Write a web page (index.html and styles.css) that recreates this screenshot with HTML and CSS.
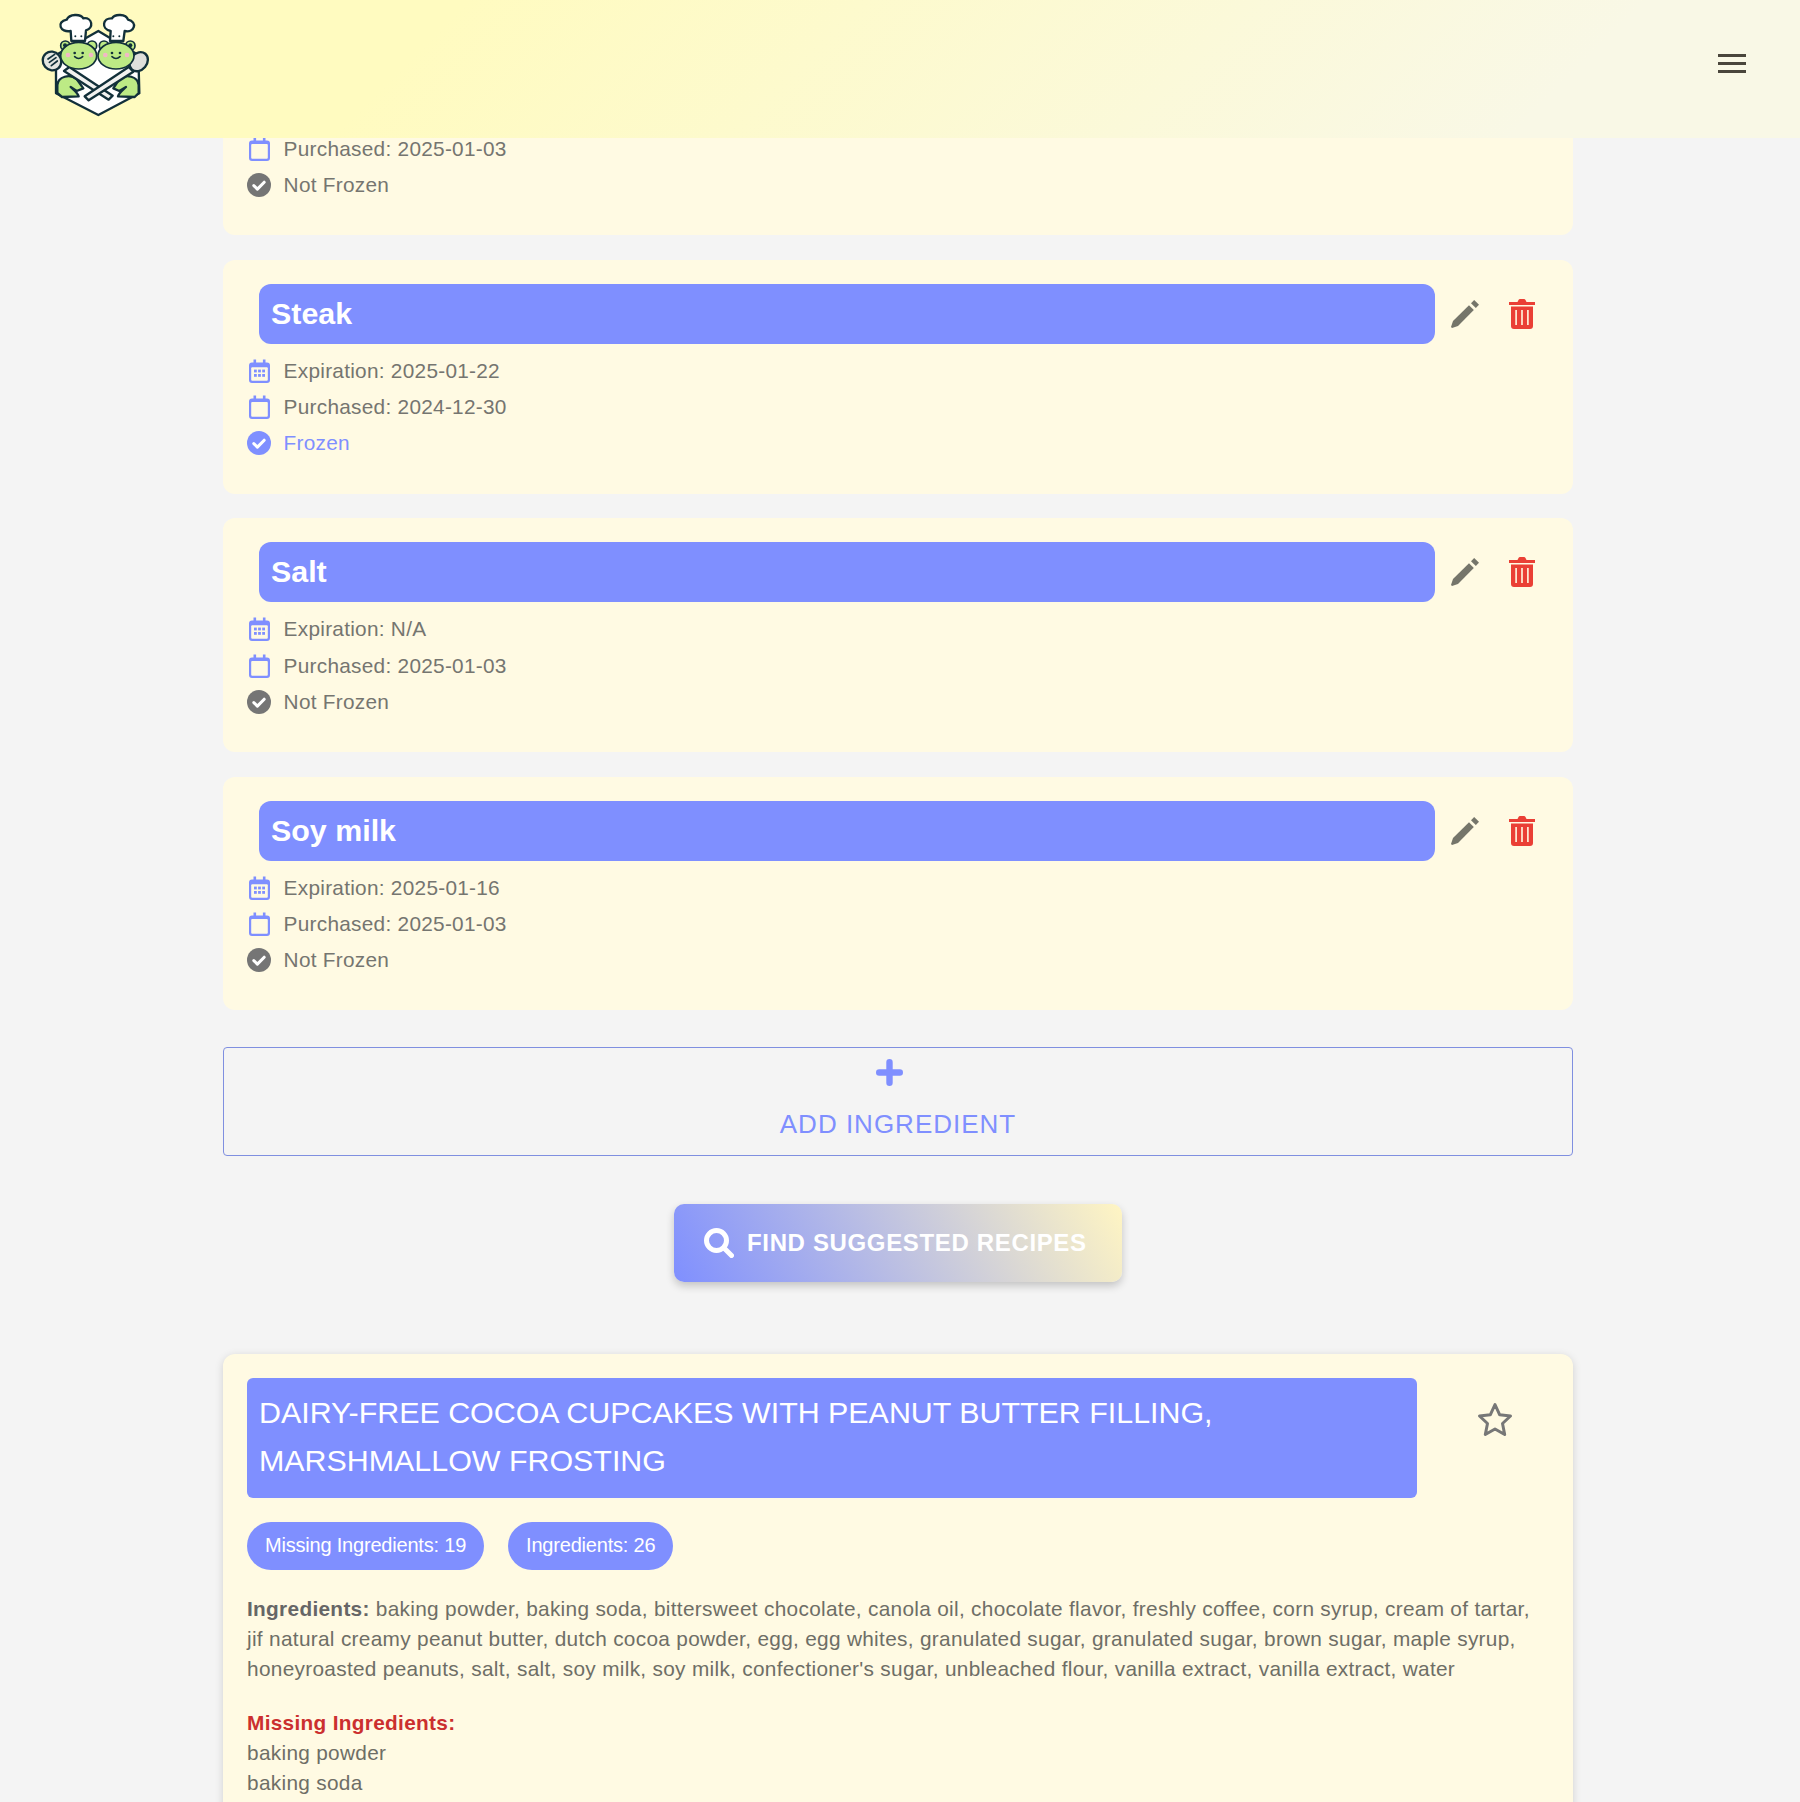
FILE: index.html
```html
<!DOCTYPE html>
<html lang="en">
<head>
<meta charset="utf-8">
<title>Pantry</title>
<link rel="stylesheet" href="styles.css">
</head>
<body>
<svg class="defs" width="0" height="0" aria-hidden="true">
  <defs>
    <symbol id="cal-days" viewBox="0 0 21 24">
      <path d="M4.5 0.5h2.6v3h6.8v-3h2.6v3H18a3 3 0 0 1 3 3V21a3 3 0 0 1-3 3H3a3 3 0 0 1-3-3V6.500a3 3 0 0 1 3-3h1.500z"/>
      <rect class="cal-in" x="2.2" y="8.200" width="16.600" height="13.600" rx="1"/>
      <g class="cal-dots">
        <rect x="5" y="10.600" width="2.800" height="2.800"/><rect x="9.100" y="10.600" width="2.800" height="2.800"/><rect x="13.200" y="10.600" width="2.800" height="2.800"/>
        <rect x="5" y="15" width="2.800" height="2.800"/><rect x="9.100" y="15" width="2.800" height="2.800"/><rect x="13.200" y="15" width="2.800" height="2.800"/>
      </g>
    </symbol>
    <symbol id="cal-blank" viewBox="0 0 21 24">
      <path d="M4.500 0.500h2.600v3h6.800v-3h2.600v3H18a3 3 0 0 1 3 3V21a3 3 0 0 1-3 3H3a3 3 0 0 1-3-3V6.500a3 3 0 0 1 3-3h1.500z"/>
      <rect class="cal-in" x="2.200" y="7" width="16.600" height="14.800" rx="1"/>
    </symbol>
    <symbol id="check" viewBox="0 0 24 24">
      <circle cx="12" cy="12" r="12"/>
      <path class="check-mark" d="M6.800 12.600L10.400 16.100 17.200 9.200"/>
    </symbol>
    <symbol id="pencil" viewBox="0 0 28 28">
      <path d="M20 3.200L23.200 0 28 4.800 24.800 8z"/>
      <path d="M18 5.200L22.800 10 7 26 1 28 0 27 2 21z"/>
    </symbol>
    <symbol id="trash" viewBox="0 0 26 30">
      <path d="M0 3h8.500L9.500 1a2 2 0 0 1 1.500-1h4a2 2 0 0 1 1.500 1l1 2H26v3H0z"/>
      <path fill-rule="evenodd" d="M2 7.500h22V27a3 3 0 0 1-3 3H5a3 3 0 0 1-3-3zM6.300 11v15h1.600V11zM12.200 11v15h1.600V11zM18.100 11v15h1.600V11z"/>
    </symbol>
  </defs>
</svg>

<header class="topbar">
  <svg class="logo" viewBox="0 0 390 360" role="img" aria-label="Two chef frogs logo">
    <g stroke="#12303a" stroke-width="7" stroke-linejoin="round" stroke-linecap="round">
      <path d="M205 78L325 150 328 265 205 330 78 265 78 150z" fill="#fff"/>
      <path d="M82 240C84 214 120 206 140 222L160 250 140 258 122 246C132 256 142 262 146 274L96 276 82 264z" fill="#bdea85"/>
      <path d="M326 240C324 214 288 206 268 222L250 250 268 258 288 246C278 256 268 262 264 274L314 276 326 264z" fill="#bdea85"/>
      <path d="M236 284L248 272 118 186 102 198z" fill="#f2f2f0"/>
      <path d="M176 286L164 274 296 186 310 200z" fill="#f2f2f0"/>
      <ellipse cx="66" cy="168" rx="27" ry="29" transform="rotate(-40 66 168)" fill="#e4e6e0"/>
      <ellipse cx="326" cy="170" rx="25" ry="31" transform="rotate(40 326 170)" fill="#dfdfdb"/>
      <g fill="#bdea85" stroke-width="5">
        <circle cx="106" cy="122" r="14"/><circle cx="186" cy="122" r="14"/>
        <circle cx="222" cy="122" r="14"/><circle cx="301" cy="122" r="14"/>
        <ellipse cx="146" cy="152" rx="54" ry="40"/>
        <ellipse cx="258" cy="152" rx="54" ry="40"/>
      </g>
      <g fill="#fff" stroke-width="7">
        <path d="M122 78C90 84 78 50 110 44 118 26 152 26 160 40 188 36 192 70 168 76L165 108 124 108z"/>
        <path d="M242 78C212 72 218 38 246 40 254 26 288 26 294 44 324 50 314 84 284 78L280 108 240 108z"/>
      </g>
    </g>
    <g fill="#12303a">
      <circle cx="105" cy="121" r="6"/><circle cx="301" cy="121" r="6"/>
      <circle cx="134" cy="144" r="4"/><circle cx="158" cy="144" r="4"/>
      <circle cx="246" cy="144" r="4"/><circle cx="270" cy="144" r="4"/>
      <circle cx="136" cy="94" r="3"/><circle cx="154" cy="94" r="3"/>
      <circle cx="250" cy="94" r="3"/><circle cx="268" cy="94" r="3"/>
    </g>
    <g fill="#f2b8c6">
      <circle cx="114" cy="150" r="7"/><circle cx="183" cy="150" r="7"/>
      <circle cx="226" cy="150" r="7"/><circle cx="291" cy="150" r="7"/>
    </g>
    <g fill="none" stroke="#12303a" stroke-width="5" stroke-linecap="round">
      <path d="M134 155Q146 166 158 155"/><path d="M246 155Q258 166 270 155"/>
      <path d="M54 162L74 148M58 172L78 158M64 182L82 168"/>
    </g>
  </svg>
  <button class="menu" type="button" aria-label="Menu"><span></span><span></span><span></span></button>
</header>

<main class="page">
  <section class="item item-cut">
    <ul class="facts">
      <li><svg class="ic ic-cal"><use href="#cal-blank"/></svg>Purchased: 2025-01-03</li>
      <li><svg class="ic ic-check"><use href="#check"/></svg>Not Frozen</li>
    </ul>
  </section>

  <section class="item">
    <div class="item-head">
      <h2 class="item-title">Steak</h2>
      <button class="act act-edit" type="button" aria-label="Edit"><svg class="ic-edit"><use href="#pencil"/></svg></button>
      <button class="act act-del" type="button" aria-label="Delete"><svg class="ic-del"><use href="#trash"/></svg></button>
    </div>
    <ul class="facts">
      <li><svg class="ic ic-cal"><use href="#cal-days"/></svg>Expiration: 2025-01-22</li>
      <li><svg class="ic ic-cal"><use href="#cal-blank"/></svg>Purchased: 2024-12-30</li>
      <li class="is-frozen"><svg class="ic ic-check"><use href="#check"/></svg>Frozen</li>
    </ul>
  </section>

  <section class="item">
    <div class="item-head">
      <h2 class="item-title">Salt</h2>
      <button class="act act-edit" type="button" aria-label="Edit"><svg class="ic-edit"><use href="#pencil"/></svg></button>
      <button class="act act-del" type="button" aria-label="Delete"><svg class="ic-del"><use href="#trash"/></svg></button>
    </div>
    <ul class="facts">
      <li><svg class="ic ic-cal"><use href="#cal-days"/></svg>Expiration: N/A</li>
      <li><svg class="ic ic-cal"><use href="#cal-blank"/></svg>Purchased: 2025-01-03</li>
      <li><svg class="ic ic-check"><use href="#check"/></svg>Not Frozen</li>
    </ul>
  </section>

  <section class="item">
    <div class="item-head">
      <h2 class="item-title">Soy milk</h2>
      <button class="act act-edit" type="button" aria-label="Edit"><svg class="ic-edit"><use href="#pencil"/></svg></button>
      <button class="act act-del" type="button" aria-label="Delete"><svg class="ic-del"><use href="#trash"/></svg></button>
    </div>
    <ul class="facts">
      <li><svg class="ic ic-cal"><use href="#cal-days"/></svg>Expiration: 2025-01-16</li>
      <li><svg class="ic ic-cal"><use href="#cal-blank"/></svg>Purchased: 2025-01-03</li>
      <li><svg class="ic ic-check"><use href="#check"/></svg>Not Frozen</li>
    </ul>
  </section>

  <button class="add" type="button">
    <svg class="add-plus" viewBox="0 0 27 27"><path d="M13.500 3.200v20.600M3.200 13.500h20.600"/></svg>
    <span class="add-label">ADD INGREDIENT</span>
  </button>

  <div class="find-wrap">
    <button class="find" type="button">
      <svg class="find-ic" viewBox="0 0 30 30"><circle cx="12.500" cy="12.500" r="10"/><path d="M20.500 20.500L27.500 27.500"/></svg>
      FIND SUGGESTED RECIPES
    </button>
  </div>

  <article class="recipe">
    <div class="recipe-head">
      <h2 class="recipe-title">DAIRY-FREE COCOA CUPCAKES WITH PEANUT BUTTER FILLING, MARSHMALLOW FROSTING</h2>
      <button class="fav" type="button" aria-label="Favourite">
        <svg class="fav-ic" viewBox="0 0 40 40"><path d="M20 4.500L24.700 14.800 35.500 16 27.500 23.500 29.700 34.500 20 29 10.300 34.500 12.500 23.500 4.500 16 15.300 14.800z"/></svg>
      </button>
    </div>
    <div class="chips">
      <span class="chip">Missing Ingredients: 19</span>
      <span class="chip">Ingredients: 26</span>
    </div>
    <p class="ing"><strong>Ingredients:</strong> baking powder, baking soda, bittersweet chocolate, canola oil, chocolate flavor, freshly coffee, corn syrup, cream of tartar, jif natural creamy peanut butter, dutch cocoa powder, egg, egg whites, granulated sugar, granulated sugar, brown sugar, maple syrup, honeyroasted peanuts, salt, salt, soy milk, soy milk, confectioner's sugar, unbleached flour, vanilla extract, vanilla extract, water</p>
    <h3 class="miss-title">Missing Ingredients:</h3>
    <ul class="miss">
      <li>baking powder</li>
      <li>baking soda</li>
    </ul>
  </article>
</main>
</body>
</html>
```
FILE: styles.css
```css
* { box-sizing: border-box; }

html, body {
  height: 1802px;
  margin: 0;
  overflow: hidden;
}

body {
  background: #f4f4f4;
  color: #6e6e66;
  font-family: "Liberation Sans", Arial, sans-serif;
}

.defs { position: absolute; }

button {
  font-family: inherit;
  border: 0;
  background: none;
  padding: 0;
}

.topbar {
  position: fixed;
  top: 0;
  left: 0;
  width: 100%;
  height: 138px;
  z-index: 10;
  display: flex;
  align-items: flex-start;
  justify-content: space-between;
  padding: 5px 54px 0 30px;
  background: linear-gradient(135deg, #fffbc0 24%, #f9f8e6 85%);
}

.logo { width: 130px; height: 120px; display: block; }

.menu {
  display: flex;
  flex-direction: column;
  gap: 5.200px;
  width: 28px;
  margin-top: 48.500px;
}

.menu span { display: block; height: 3px; background: #4a463c; }

.page {
  width: 1795px;
  padding: 131px 222px 0 223px;
}

.item {
  background: #fffae3;
  border-radius: 12px;
  padding: 24px 22.500px 32.400px 21.600px;
  margin-bottom: 24.600px;
}

.item-cut { padding: 0 21.500px 32.140px 21.600px; border-radius: 0 0 12px 12px; }

.item-head { display: flex; align-items: stretch; margin-left: 14.400px; margin-bottom: 9px; }

.item-title {
  flex: 1;
  height: 60px;
  margin: 0;
  padding: 0 12px;
  background: #7f8fff;
  color: #fff;
  border-radius: 12px;
  font-size: 30.400px;
  font-weight: 700;
  line-height: 58px;
}

.act {
  width: 57px;
  display: flex;
  align-items: center;
  justify-content: center;
}

.act-edit { margin-left: 1.500px; }
.ic-edit { width: 28px; height: 28px; fill: #75756a; }
.ic-del { width: 26px; height: 30px; fill: #ea3f35; }

.facts { list-style: none; margin: 0; padding: 0; }

.facts li {
  display: flex;
  align-items: center;
  height: 36.130px;
  font-size: 20.800px;
  letter-spacing: 0.270px;
  color: #757570;
}

.facts .is-frozen { color: #7f8fff; }

.ic { flex: none; width: 24px; height: 24px; margin-right: 13px; margin-left: 2px; fill: #7f8fff; }
.ic-cal { width: 21px; margin-left: 4px; margin-right: 14px; }
.ic-check { fill: #757575; }
.is-frozen .ic-check { fill: #7f8fff; }
.check-mark { fill: none; stroke: #fff; stroke-width: 3; stroke-linecap: round; stroke-linejoin: round; }
.cal-in { fill: #fffae3; }
.cal-dots { fill: #7f8fff; }

.add {
  display: flex;
  flex-direction: column;
  align-items: center;
  width: 100%;
  height: 109px;
  margin-top: 36.860px;
  padding-top: 11px;
  border: 1px solid #7f8fe0;
  border-radius: 4px;
  color: #7f8fff;
  font-size: 26px;
  letter-spacing: 1px;
}

.add-plus {
  width: 27px;
  height: 27px;
  margin-right: 17px;
  fill: none;
  stroke: #7f8fff;
  stroke-width: 6.400;
  stroke-linecap: round;
}

.add-label { margin-top: 23px; line-height: 30px; }

.find-wrap { display: flex; justify-content: center; margin-top: 48px; }

.find {
  display: flex;
  align-items: center;
  gap: 13px;
  width: 448px;
  height: 78px;
  padding-left: 30px;
  border-radius: 10px;
  background: linear-gradient(60deg, #7f8fff 0%, #fff5c3 100%);
  box-shadow: 0 4px 8px rgba(0, 0, 0, .2);
  color: #fff;
  font-size: 24px;
  font-weight: 700;
  letter-spacing: 0.650px;
}

.find-ic {
  flex: none;
  width: 30px;
  height: 30px;
  fill: none;
  stroke: #fff;
  stroke-width: 5;
  stroke-linecap: round;
}

.recipe {
  margin-top: 72px;
  padding: 24px 24px 80px;
  background: #fffae3;
  border-radius: 12px;
  box-shadow: 0 2px 8px rgba(0, 0, 0, .15);
}

.recipe-head { display: flex; align-items: flex-start; }

.recipe-title {
  flex: 1;
  margin: 0;
  padding: 10px 12px 14px;
  background: #7f8fff;
  color: #fff;
  border-radius: 6px;
  font-size: 30.400px;
  font-weight: 400;
  line-height: 48px;
}

.fav { flex: none; width: 132px; padding: 22px 0 0 58px; display: flex; }

.fav-ic {
  width: 40px;
  height: 40px;
  fill: none;
  stroke: #777;
  stroke-width: 3;
  stroke-linejoin: round;
}

.chips { display: flex; gap: 24px; margin-top: 24px; }

.chip {
  height: 48px;
  padding: 0 18px;
  border-radius: 24px;
  background: #7f8fff;
  color: #fff;
  font-size: 20px;
  letter-spacing: -0.200px;
  line-height: 46px;
}

.ing, .miss-title, .miss li {
  font-size: 20.800px;
  letter-spacing: 0.310px;
  line-height: 30px;
}

.ing { margin: 24px 0 0; padding-right: 16px; color: #6e6e66; }
.ing strong { color: #666; }

.miss-title {
  margin: 24px 0 0;
  color: #cb2f2f;
  font-weight: 700;
}

.miss { list-style: none; margin: 0; padding: 0; color: #6e6e66; }
```
